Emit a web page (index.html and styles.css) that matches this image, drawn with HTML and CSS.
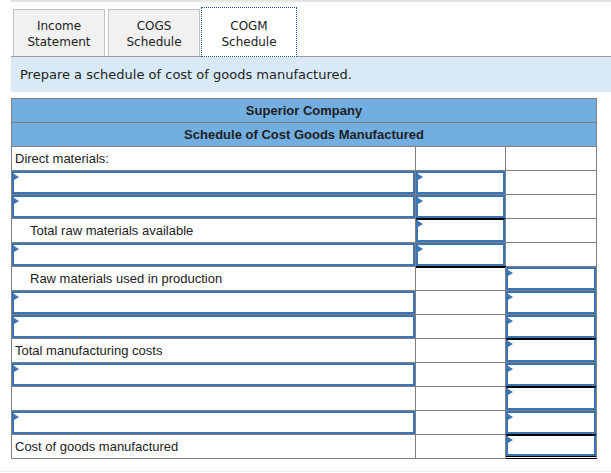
FILE: index.html
```html
<!DOCTYPE html>
<html>
<head>
<meta charset="utf-8">
<link rel="stylesheet" href="styles.css">
</head>
<body>
<div class="topstrip"></div>
<div class="tabs">
  <div class="tab t1">Income<br>Statement</div>
  <div class="tab t2">COGS<br>Schedule</div>
  <div class="tab active">COGM<br>Schedule</div>
</div>
<div class="prompt">Prepare a schedule of cost of goods manufactured.</div>
<div class="sched">
  <div class="c hd">Superior Company</div>
  <div class="c hd">Schedule of Cost Goods Manufactured</div>

  <div class="c lbl">Direct materials:</div><div class="c"></div><div class="c"></div>

  <div class="c"><div class="box"></div></div><div class="c"><div class="box"></div></div><div class="c"></div>

  <div class="c"><div class="box"></div></div><div class="c"><div class="box"></div></div><div class="c"></div>

  <div class="c lbl ind">Total raw materials available</div><div class="c"><div class="box tb"></div></div><div class="c"></div>

  <div class="c"><div class="box"></div></div><div class="c"><div class="box"></div></div><div class="c"></div>

  <div class="c lbl ind">Raw materials used in production</div><div class="c tbc"></div><div class="c"><div class="box"></div></div>

  <div class="c"><div class="box"></div></div><div class="c"></div><div class="c"><div class="box"></div></div>

  <div class="c"><div class="box"></div></div><div class="c"></div><div class="c"><div class="box"></div></div>

  <div class="c lbl">Total manufacturing costs</div><div class="c"></div><div class="c"><div class="box tb"></div></div>

  <div class="c"><div class="box"></div></div><div class="c"></div><div class="c"><div class="box"></div></div>

  <div class="c"></div><div class="c"></div><div class="c"><div class="box tb"></div></div>

  <div class="c"><div class="box"></div></div><div class="c"></div><div class="c"><div class="box"></div></div>

  <div class="c lbl">Cost of goods manufactured</div><div class="c"></div><div class="c dbl"><div class="box tb"></div></div>
</div>
<div class="bottomline"></div>
</body>
</html>
```
FILE: styles.css
```css
html, body {
  margin: 0;
  padding: 0;
  background: #ffffff;
}
body {
  width: 611px;
  height: 473px;
  overflow: hidden;
  font-family: "DejaVu Sans", Verdana, sans-serif;
  color: #222;
}
.topstrip {
  margin-left: 11px;
  height: 2px;
  background: #e4e4e4;
}
.tabs {
  display: flex;
  align-items: flex-end;
  padding-left: 13px;
  margin-top: 5px;
  height: 49px;
}
.tab {
  box-sizing: border-box;
  width: 92px;
  height: 47px;
  border: 1px solid #c2c2c2;
  border-bottom: none;
  background: #f1f1f1;
  font-size: 12px;
  line-height: 16px;
  text-align: center;
  padding-top: 8px;
  color: #222;
}
.t1 { margin-right: 3px; }
.t2 { margin-right: 1px; }
.tab.active {
  width: 96px;
  height: 50px;
  background: #fff;
  border: 1px dotted #1f56a3;
  padding-top: 10px;
  position: relative;
  z-index: 1;
  margin-bottom: -1px;
}
.prompt {
  margin-left: 11px;
  border-top: 1px solid #9a9a9a;
  background: #d9eaf6;
  height: 35px;
  line-height: 35px;
  padding-left: 9px;
  font-size: 13px;
  color: #222;
}
.sched {
  margin: 6px 0 0 11px;
  width: 586px;
  box-sizing: border-box;
  display: grid;
  grid-template-columns: 404px 90px 91px;
  grid-auto-rows: 24px;
  border-top: 1px solid #7f7f7f;
  border-left: 1px solid #7f7f7f;
  font-family: "Liberation Sans", Arial, sans-serif;
  font-size: 13px;
  color: #222;
}
.c {
  box-sizing: border-box;
  border-right: 1px solid #7f7f7f;
  border-bottom: 1px solid #7f7f7f;
  position: relative;
  line-height: 23px;
}
.hd {
  grid-column: 1 / 4;
  background: #72aee0;
  text-align: center;
  font-weight: bold;
  color: #1e1e1e;
}
.lbl {
  padding-left: 3px;
}
.lbl.ind {
  padding-left: 18px;
}
.tbc {
  box-shadow: inset 0 1px 0 #000, 0 -1px 0 #000;
}
.dbl {
  border-bottom: 3px double #000;
}
.box {
  box-sizing: border-box;
  height: 100%;
  border: 2px solid #3b74b4;
  position: relative;
}
.box.tb {
  border-top: 1px solid #000;
  box-shadow: 0 -1px 0 #000;
}
.box::before {
  content: "";
  position: absolute;
  left: 0;
  top: 1px;
  border-left: 5px solid #3b74b4;
  border-top: 3px solid transparent;
  border-bottom: 3px solid transparent;
}
.bottomline {
  margin-top: 12px;
  border-top: 1px solid #efefef;
}
```
